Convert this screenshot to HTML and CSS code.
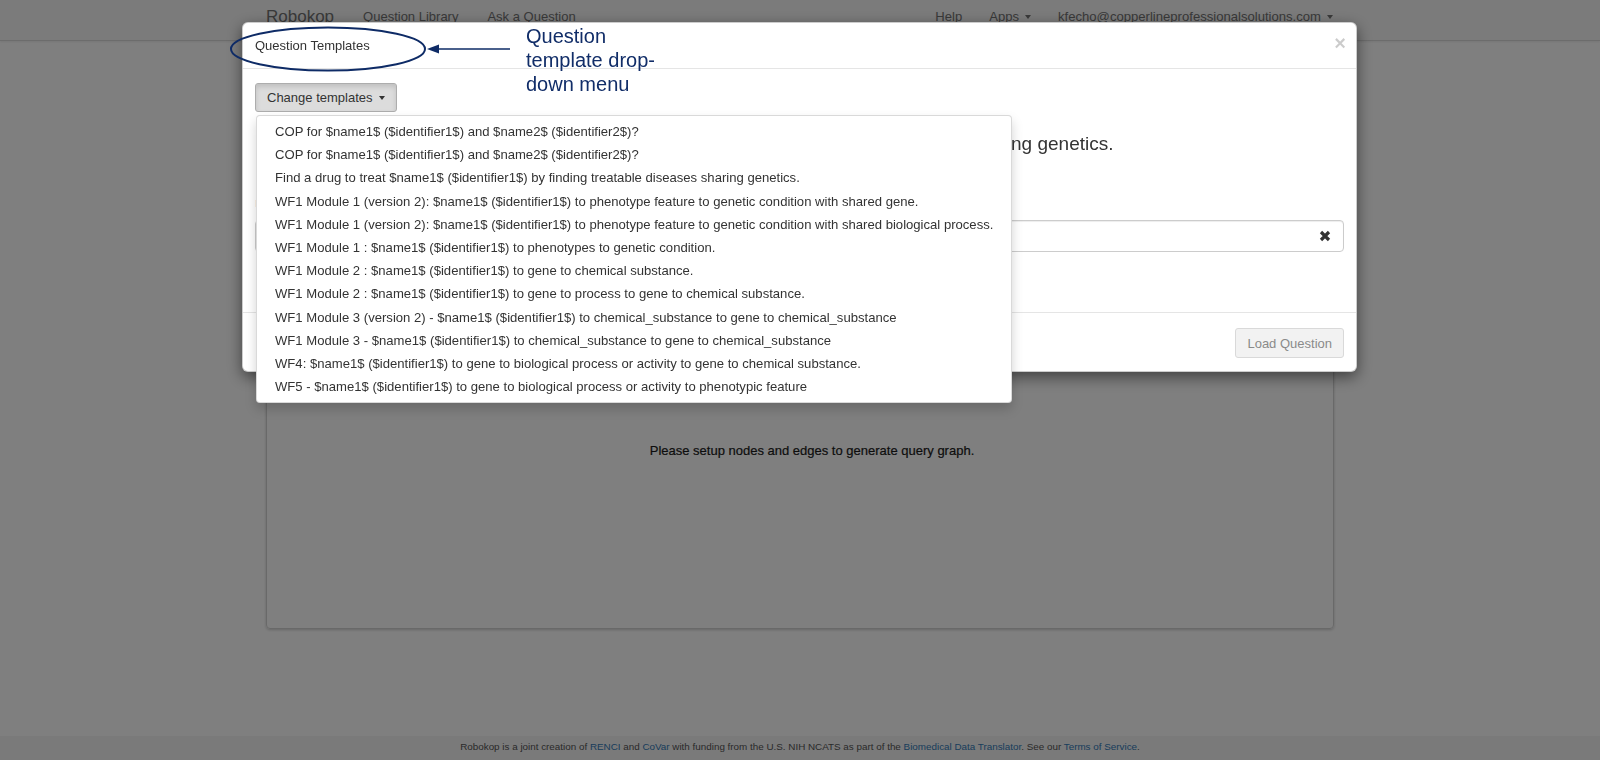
FILE: index.html
```html
<!DOCTYPE html>
<html lang="en">
<head>
<meta charset="utf-8">
<title>Robokop - Ask a Question</title>
<link rel="stylesheet" href="styles.css">
</head>
<body>
<header class="navbar">
  <div class="nav-inner">
    <a class="brand">Robokop</a>
    <a class="nav-link">Question Library</a>
    <a class="nav-link">Ask a Question</a>
    <div class="nav-right">
      <a class="nav-link">Help</a>
      <a class="nav-link">Apps<span class="caret"></span></a>
      <a class="nav-link">kfecho@copperlineprofessionalsolutions.com<span class="caret"></span></a>
    </div>
  </div>
</header>

<main class="page">
  <section class="graph-box">
    <p class="graph-msg">Please setup nodes and edges to generate query graph.</p>
  </section>
</main>

<footer class="site-footer">
  Robokop is a joint creation of <a>RENCI</a> and <a>CoVar</a> with funding from the U.S. NIH NCATS as part of the <a>Biomedical Data Translator</a>. See our <a>Terms of Service</a>.
</footer>

<div class="backdrop"></div>

<div class="modal">
  <div class="modal-dialog">
    <div class="modal-header">
      <span class="modal-title">Question Templates</span>
      <span class="close">×</span>
    </div>
    <div class="modal-body">
      <div class="dropdown">
        <button class="btn btn-active">Change templates<span class="caret"></span></button>
        <ul class="dropdown-menu">
          <li>COP for $name1$ ($identifier1$) and $name2$ ($identifier2$)?</li>
          <li>COP for $name1$ ($identifier1$) and $name2$ ($identifier2$)?</li>
          <li>Find a drug to treat $name1$ ($identifier1$) by finding treatable diseases sharing genetics.</li>
          <li>WF1 Module 1 (version 2): $name1$ ($identifier1$) to phenotype feature to genetic condition with shared gene.</li>
          <li>WF1 Module 1 (version 2): $name1$ ($identifier1$) to phenotype feature to genetic condition with shared biological process.</li>
          <li>WF1 Module 1 : $name1$ ($identifier1$) to phenotypes to genetic condition.</li>
          <li>WF1 Module 2 : $name1$ ($identifier1$) to gene to chemical substance.</li>
          <li>WF1 Module 2 : $name1$ ($identifier1$) to gene to process to gene to chemical substance.</li>
          <li>WF1 Module 3 (version 2) - $name1$ ($identifier1$) to chemical_substance to gene to chemical_substance</li>
          <li>WF1 Module 3 - $name1$ ($identifier1$) to chemical_substance to gene to chemical_substance</li>
          <li>WF4: $name1$ ($identifier1$) to gene to biological process or activity to gene to chemical substance.</li>
          <li>WF5 - $name1$ ($identifier1$) to gene to biological process or activity to phenotypic feature</li>
        </ul>
      </div>
      <h4 class="question-text">Find a drug to treat $name1$ ($identifier1$) by finding treatable diseases sharing genetics.</h4>
      <label class="field-label">name1</label>
      <div class="input-box">
        <svg class="clear-icon" width="12" height="12" viewBox="0 0 12 12"><path d="M2 2 L10 10 M10 2 L2 10" stroke="#333" stroke-width="3.2" fill="none"/></svg>
      </div>
    </div>
    <div class="modal-footer">
      <button class="btn btn-disabled">Load Question</button>
    </div>
  </div>
</div>

<div class="annotation">
  <svg class="annotation-svg" width="620" height="100" viewBox="0 0 620 100">
    <ellipse cx="328" cy="49" rx="97" ry="21.5" fill="none" stroke="#0e2b66" stroke-width="2"/>
    <line x1="437" y1="49" x2="510" y2="49" stroke="#0e2b66" stroke-width="1.6"/>
    <polygon points="427,49 439,44.5 439,53.5" fill="#0e2b66"/>
  </svg>
  <div class="annotation-text">Question<br>template drop-<br>down menu</div>
</div>
</body>
</html>
```

FILE: styles.css
```css
* { box-sizing: border-box; }

html, body {
  margin: 0;
  padding: 0;
  height: 100%;
}

body {
  font-family: "Liberation Sans", Arial, sans-serif;
  font-size: 13px;
  color: #333;
  background: #fff;
  display: flex;
  flex-direction: column;
  min-height: 760px;
  overflow: hidden;
}

a { text-decoration: none; }

/* ---------- navbar ---------- */
.navbar {
  height: 41px;
  background: #f6f6f6;
  border-bottom: 1px solid #d9d9d9;
  box-shadow: 0 1px 2px rgba(0,0,0,.08);
  flex: none;
}

.nav-inner {
  width: 1068px;
  margin: 0 auto;
  height: 33px;
  display: flex;
  align-items: center;
  gap: 29px;
}

.brand {
  font-size: 17px;
  color: #737373;
}

.nav-link {
  color: #737373;
  font-size: 13px;
  display: inline-flex;
  align-items: center;
}

.nav-right {
  margin-left: auto;
  margin-right: 1px;
  display: flex;
  align-items: center;
  gap: 27px;
}

.nav-right .nav-link { font-size: 13.1px; }

.caret {
  display: inline-block;
  width: 0;
  height: 0;
  margin-left: 6px;
  border-top: 4px solid currentColor;
  border-left: 3.5px solid transparent;
  border-right: 3.5px solid transparent;
}

/* ---------- page ---------- */
.page {
  width: 1068px;
  margin: 0 auto;
  padding-top: 139px;
  flex: 1;
}

.graph-box {
  height: 449px;
  border: 1px solid #d2d2d2;
  border-radius: 4px;
  box-shadow: 0 1px 3px rgba(0,0,0,.2);
  padding-top: 262px;
  text-align: center;
}

.graph-msg {
  margin: 0;
  line-height: 16px;
  color: #1a1a1a;
  font-size: 13px;
  padding-left: 24px;
  -webkit-text-stroke: 0.2px #1a1a1a;
}

.site-footer {
  flex: none;
  height: 24px;
  line-height: 22px;
  background: #f4f4f4;
  text-align: center;
  font-size: 9.85px;
  color: #555;
}

.site-footer a { color: #337ab7; }

/* ---------- backdrop & modal ---------- */
.backdrop {
  position: fixed;
  inset: 0;
  background: rgba(0,0,0,.5);
}

.modal {
  position: fixed;
  inset: 0;
}

.modal-dialog {
  width: 1115px;
  margin: 22px 0 0 242px;
  background: #fff;
  border: 1px solid rgba(0,0,0,.2);
  border-radius: 6px;
  box-shadow: 0 5px 15px rgba(0,0,0,.5);
}

.modal-header {
  height: 46px;
  border-bottom: 1px solid #e5e5e5;
  padding: 0 10px 0 12px;
  display: flex;
  align-items: center;
}

.modal-title {
  font-size: 13px;
  color: #333;
}

.close {
  margin-left: auto;
  font-size: 20px;
  font-weight: bold;
  line-height: 1;
  color: #000;
  opacity: .2;
  margin-top: -6px;
}

.modal-body {
  padding: 14px 12px 60px 12px;
}

.dropdown {
  position: relative;
  width: max-content;
}

.btn {
  font-family: inherit;
  font-size: 13px;
  line-height: 17px;
  padding: 5px 11px;
  border-radius: 3px;
  display: inline-flex;
  align-items: center;
}

.btn-active {
  height: 29px;
  background: #dcdcdc;
  border: 1px solid #adadad;
  color: #333;
  box-shadow: inset 0 3px 5px rgba(0,0,0,.125);
}

.btn-active .caret { margin-left: 6px; border-top-color: #333; }

.dropdown-menu {
  position: absolute;
  left: 1px;
  top: 32px;
  z-index: 5;
  width: 756px;
  margin: 0;
  padding: 4px 0 4px;
  list-style: none;
  background: #fff;
  border: 1px solid rgba(0,0,0,.15);
  border-radius: 4px;
  box-shadow: 0 6px 12px rgba(0,0,0,.175);
}

.dropdown-menu li {
  padding: 3px 18px;
  line-height: 17.2px;
  font-size: 13.1px;
  color: #333;
  white-space: nowrap;
}

.question-text {
  margin: 21px 0 0;
  padding-left: 97px;
  font-size: 19px;
  line-height: 22px;
  font-weight: normal;
  color: #333;
}

.field-label {
  display: block;
  margin-top: 39px;
  line-height: 17px;
  color: #e8902a;
  font-size: 13px;
}

.input-box {
  margin-top: 9px;
  height: 32px;
  border: 1px solid #ccc;
  border-radius: 4px;
  box-shadow: inset 0 1px 1px rgba(0,0,0,.075);
  display: flex;
  align-items: center;
  justify-content: flex-end;
  padding-right: 12px;
}

.modal-footer {
  border-top: 1px solid #e5e5e5;
  padding: 15px 12px 13px;
  display: flex;
  justify-content: flex-end;
}

.btn-disabled {
  height: 30px;
  background: #f2f2f2;
  border: 1px solid #d9d9d9;
  color: #8a8a8a;
}

/* ---------- annotation overlay ---------- */
.annotation {
  position: fixed;
  left: 0;
  top: 0;
  width: 700px;
  height: 100px;
  pointer-events: none;
}

.annotation-svg {
  position: absolute;
  left: 0;
  top: 0;
}

.annotation-text {
  position: absolute;
  left: 526px;
  top: 24px;
  font-size: 20px;
  line-height: 24px;
  color: #112d68;
}
```
